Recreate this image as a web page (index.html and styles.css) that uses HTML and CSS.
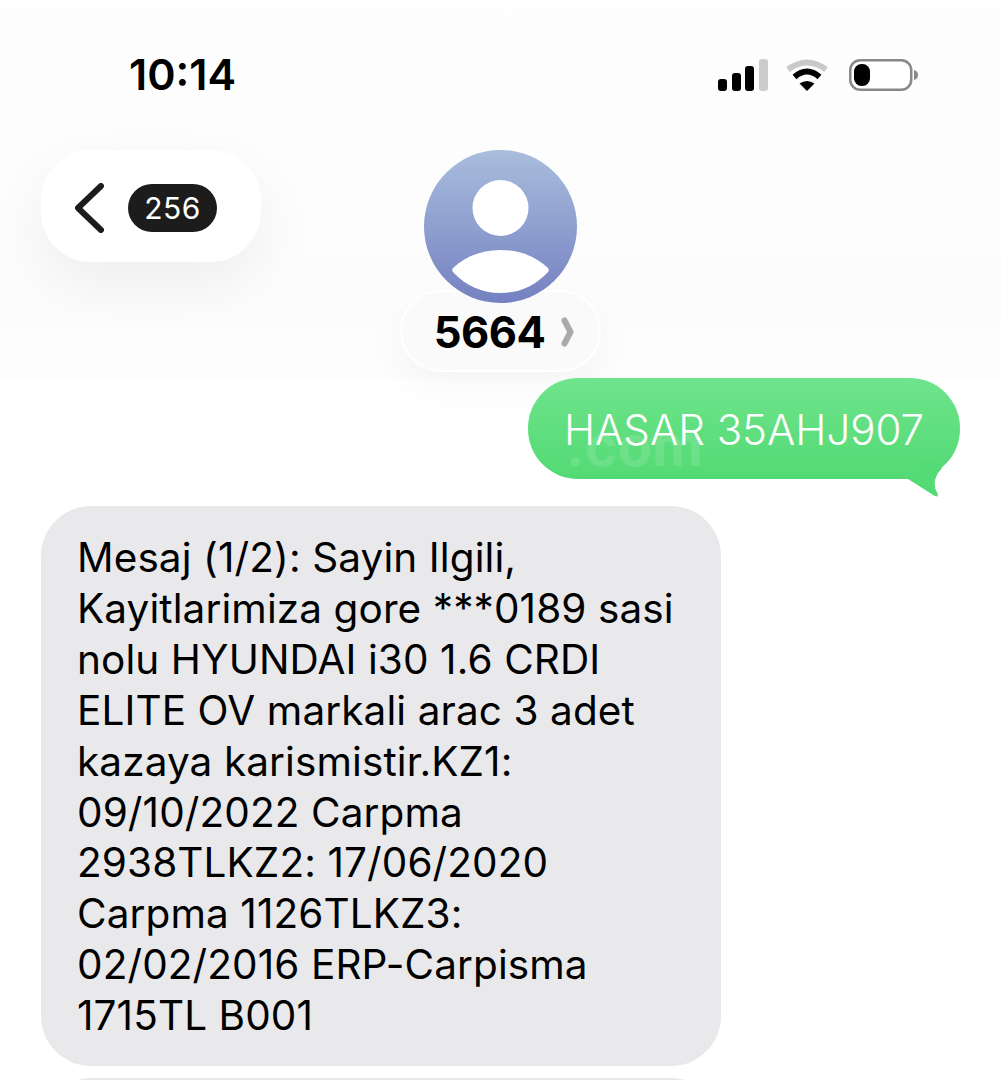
FILE: index.html
```html
<!DOCTYPE HTML>
<html>

<head>
    <title>5664</title>
    <meta name="viewport" content="width=device-width, initial-scale=1">
    <link rel="stylesheet" href="styles.css">
</head>

<body>
    <header class="top">
        <div class="status">
            <span class="time">10:14</span>
            <div class="status-icons">
                <svg class="signal" width="50" height="32" viewBox="0 0 50 32">
                    <rect x="0" y="20" width="9" height="12" rx="3" fill="#000" />
                    <rect x="14" y="14" width="9" height="18" rx="3" fill="#000" />
                    <rect x="27" y="7" width="9" height="25" rx="3" fill="#000" />
                    <rect x="41" y="0" width="9" height="32" rx="3" fill="#ccc" />
                </svg>
                <svg class="wifi" width="44" height="32" viewBox="0 0 44 32">
                    <path d="M3 10.500 Q22 -3.500 41 10.500" fill="none" stroke="#c9c9c9" stroke-width="6" />
                    <path d="M9.500 18 Q22 7 34.500 18" fill="none" stroke="#000" stroke-width="6" />
                    <path d="M14.500 24.500 Q22 19.500 29.500 24.500 L22 32 Z" fill="#000" />
                </svg>
                <svg class="battery" width="69" height="32" viewBox="0 0 69 32">
                    <rect x="1.250" y="1.250" width="61" height="29.500" rx="10" fill="#fff" stroke="#888" stroke-width="2.500" />
                    <rect x="5" y="5" width="16" height="22" rx="7.500" fill="#000" />
                    <path d="M65 11 Q69 12 69 16 Q69 20 65 21 Z" fill="#888" />
                </svg>
            </div>
        </div>

        <div class="nav">
            <div class="back">
                <svg class="chevron" width="30" height="50" viewBox="0 0 30 50">
                    <path d="M26 3 L3 25 L26 47" fill="none" stroke="#1c1c1c" stroke-width="6" stroke-linecap="round" stroke-linejoin="round" />
                </svg>
                <span class="badge">256</span>
            </div>
            <div class="contact">
                <svg class="avatar" width="153" height="153" viewBox="0 0 153 153">
                    <defs>
                        <linearGradient id="avatarFill" x1="0" y1="0" x2="0" y2="1">
                            <stop offset="0" stop-color="#a9bddd" />
                            <stop offset="1" stop-color="#7581c1" />
                        </linearGradient>
                    </defs>
                    <circle cx="76.500" cy="76.500" r="76.500" fill="url(#avatarFill)" />
                    <circle cx="76.500" cy="58" r="28" fill="#fff" />
                    <path d="M29 118 C42 106 58 100 76.500 100 C95 100 111 106 124 118 Q125.500 120 124 122 C111 136 95 143 76.500 143 C58 143 42 136 29 122 Q27.500 120 29 118 Z" fill="#fff" />
                </svg>
                <div class="name-pill">
                    <span class="name">5664</span>
                    <svg class="name-arrow" width="13" height="30" viewBox="0 0 13 30">
                        <path d="M3.500 3.500 L9.500 15 L3.500 26.500" fill="none" stroke="#aaa" stroke-width="6" stroke-linecap="round" stroke-linejoin="round" />
                    </svg>
                </div>
            </div>
        </div>
    </header>

    <main class="thread">
        <div class="sent">
            <span class="sent-text">HASAR 35AHJ907</span>
            <span class="watermark">.com</span>
            <svg class="tail" width="50" height="34" viewBox="0 0 50 34">
                <path d="M12 16 L38 32.500 Q43 35 41.500 30.500 Q34 18 46 5 L30 0 Z" fill="#54db75" />
            </svg>
        </div>

        <div class="received">
            Mesaj (1/2): Sayin Ilgili,<br>
            Kayitlarimiza gore ***0189 sasi<br>
            nolu HYUNDAI i30 1.6 CRDI<br>
            ELITE OV markali arac 3 adet<br>
            kazaya karismistir.KZ1:<br>
            09/10/2022 Carpma<br>
            2938TLKZ2: 17/06/2020<br>
            Carpma 1126TLKZ3:<br>
            02/02/2016 ERP-Carpisma<br>
            1715TL B001
        </div>

        <div class="received next"></div>
    </main>
</body>

</html>
```

FILE: styles.css
```css
html {
    font-family: Inter, "Liberation Sans", sans-serif;
}

body {
    margin: 0;
    height: 1080px;
    overflow: hidden;
    background-color: #fff;
    color: #000;
}

.top {
    height: 378px;
    background: linear-gradient(#fefefe, #fcfcfc 80%, #fdfdfd);
}

.status {
    display: flex;
    justify-content: space-between;
    align-items: center;
    padding: 57px 83px 0 129px;
    height: 35px;
}

.time {
    font-size: 43px;
    font-weight: 600;
    line-height: 35px;
    letter-spacing: 0;
}

.status-icons {
    display: flex;
    align-items: center;
    gap: 18px;
}

.status-icons svg {
    display: block;
}

.signal {
    margin-right: -1px;
}

.wifi {
    margin-right: 2px;
}

.nav {
    display: grid;
    grid-template-columns: 1fr auto 1fr;
    align-items: start;
    padding: 58px 41px 0;
}

.back {
    display: flex;
    align-items: center;
    gap: 23px;
    width: 186px;
    height: 112px;
    padding-left: 34px;
    border-radius: 50px;
    background-color: #fff;
    box-shadow: 0 22px 60px rgba(0, 0, 0, 0.06);
}

.chevron {
    flex: none;
    margin-top: 3px;
}

.badge {
    width: 89px;
    height: 48px;
    margin-top: 3px;
    border-radius: 24px;
    background-color: #1c1c1c;
    color: #fff;
    font-size: 30px;
    line-height: 48px;
    text-align: center;
    letter-spacing: 0.5px;
}

.contact {
    display: flex;
    flex-direction: column;
    align-items: center;
}

.avatar {
    display: block;
    position: relative;
    z-index: 1;
}

.name-pill {
    display: flex;
    align-items: center;
    justify-content: center;
    gap: 16px;
    box-sizing: border-box;
    width: 201px;
    height: 82px;
    margin-top: -13px;
    padding: 2px 0 0 7px;
    border: 2px solid #fff;
    border-radius: 41px;
    background-color: #fafafa;
    box-shadow: 0 14px 40px rgba(0, 0, 0, 0.04);
}

.name {
    font-size: 43.500px;
    font-weight: 700;
    letter-spacing: -0.5px;
}

.thread {
    display: flex;
    flex-direction: column;
    height: 702px;
    padding: 0 41px;
    overflow: hidden;
}

.sent {
    position: relative;
    flex: none;
    align-self: flex-end;
    box-sizing: border-box;
    width: 432px;
    height: 101px;
    padding-left: 36px;
    border-radius: 50px;
    background: linear-gradient(#6fe48c, #53da74);
    color: #fff;
    font-size: 42px;
    font-weight: 300;
    line-height: 103px;
}

.sent-text {
    position: relative;
    z-index: 1;
}

.watermark {
    position: absolute;
    left: 38px;
    top: 35px;
    font-size: 56px;
    font-weight: 700;
    line-height: 66px;
    color: rgba(255, 255, 255, 0.12);
}

.tail {
    position: absolute;
    right: 14px;
    bottom: -18px;
}

.received {
    flex: none;
    box-sizing: border-box;
    width: 680px;
    margin-top: 27px;
    padding: 27px 36px 24px;
    border-radius: 50px;
    background-color: #e9e9eb;
    font-size: 40.500px;
    letter-spacing: 0.1px;
    white-space: nowrap;
    line-height: 50.900px;
}

.received.next {
    height: 120px;
    margin-top: 12px;
}
```
